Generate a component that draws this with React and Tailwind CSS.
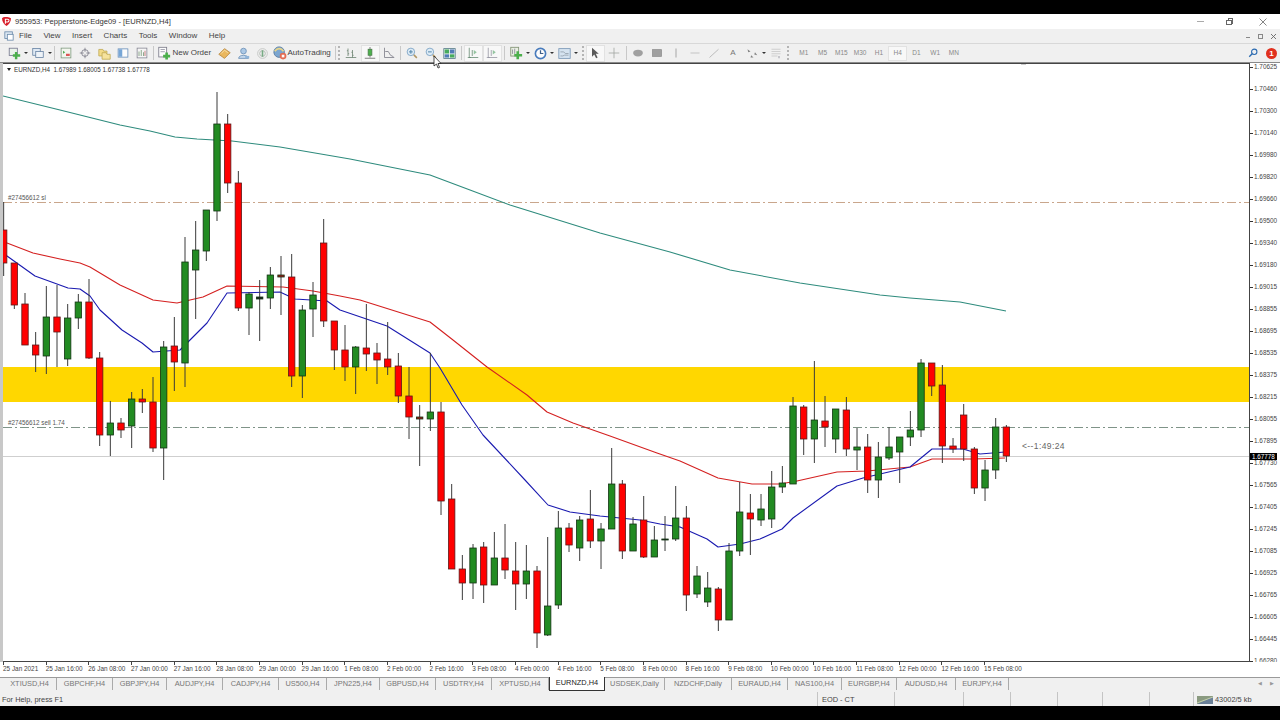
import React from "react";

const C = [
[230,263,202,276,'r'],[263,305,263,309,'r'],[304,345,293,345,'r'],[345,355,332,372,'r'],[317,356,286,374,'g'],[317,332,285,367,'r'],[318,359,304,366,'g'],[302,318,294,329,'g'],[302,358,279,359,'r'],[358,435,352,446,'r'],
[423,435,401,456,'g'],[423,430,418,438,'r'],[399,426,392,448,'g'],[399,402,389,413,'r'],[402,448,377,452,'r'],[347,448,341,480,'g'],[346,362,317,391,'r'],[262,363,237,387,'g'],[250,270,221,319,'g'],[210,251,210,261,'g'],
[124,211,92,221,'g'],[124,183,114,193,'r'],[183,308,171,311,'r'],[294,308,292,335,'g'],[297,299,280,341,'k'],[275,298,267,309,'g'],[275,277,256,315,'d'],[277,376,254,387,'r'],[310,376,305,398,'g'],[295,309,282,337,'g'],
[243,321,219,327,'r'],[321,350,321,370,'r'],[350,367,325,381,'r'],[347,367,346,394,'g'],[348,354,304,371,'r'],[353,360,343,384,'r'],[359,367,322,375,'r'],[366,396,353,403,'r'],[396,417,367,439,'r'],[417,419,405,466,'d'],
[412,419,353,431,'g'],[412,501,402,515,'r'],[499,569,484,569,'r'],[569,583,555,600,'r'],[548,583,544,599,'g'],[547,585,542,603,'r'],[558,585,532,585,'g'],[558,570,524,579,'r'],[571,584,542,610,'r'],[571,584,545,599,'g'],
[571,633,566,648,'r'],[606,635,537,636,'g'],[528,605,511,609,'g'],[528,545,523,552,'r'],[520,548,516,561,'g'],[519,541,490,548,'r'],[529,541,523,569,'g'],[484,529,448,529,'g'],[484,551,480,559,'r'],[524,551,517,551,'g'],
[520,557,496,558,'r'],[540,557,526,557,'g'],[539,540,516,551,'k'],[518,539,486,541,'g'],[518,595,506,611,'r'],[576,594,566,598,'g'],[588,602,572,607,'g'],[589,620,587,631,'r'],[551,620,543,620,'g'],[512,551,482,556,'g'],
[513,519,494,555,'r'],[509,520,494,526,'g'],[487,519,471,528,'g'],[483,487,466,493,'g'],[406,484,397,484,'g'],[407,439,405,455,'r'],[420,439,361,463,'g'],[421,427,396,447,'r'],[409,439,409,453,'g'],[410,449,397,456,'r'],
[447,450,428,470,'g'],[447,480,434,493,'r'],[457,480,442,498,'g'],[447,458,427,460,'g'],[437,452,437,483,'g'],[430,437,411,446,'g'],[363,430,359,437,'g'],[363,386,363,396,'r'],[385,446,365,463,'r'],[446,449,438,453,'r'],
[415,449,404,461,'r'],[449,488,447,494,'r'],[470,488,460,501,'g'],[427,470,418,479,'g'],[427,456,425,462,'r'],
];

const teal = "3,96 60,110 120,125 150,131 175,137 197,139 232,141 280,147 350,159 430,175 470,190 510,205 600,233 670,252 730,270 800,283 880,295 910,298 960,302 1006,311";
const red = "3,240 7,243 33,253 60,259 80,263 90,267 120,285 153,300 177,303 203,297 227,286 283,287 313,291 340,296 360,300 430,322 453,340 487,367 527,395 547,412 573,423 610,436 657,453 680,461 718,478 752,484 780,484 797,481 837,472 867,471 910,467 932,459 973,459 1005,458";
const blue = "3,252 7,256 35,276 68,288 80,289 90,296 100,310 122,330 142,343 153,352 180,350 207,323 227,293 280,292 295,299 327,301 340,310 387,326 430,353 440,368 462,405 483,435 525,480 548,505 570,512 600,516 640,520 660,524 680,527 707,539 718,547 740,544 760,539 782,529 793,518 837,486 863,478 910,467 932,449 963,449 980,454 1005,452";

const prices = ["1.70625","1.70460","1.70300","1.70140","1.69980","1.69820","1.69660","1.69500","1.69340","1.69180","1.69015","1.68855","1.68695","1.68535","1.68375","1.68215","1.68055","1.67895","1.67730","1.67565","1.67405","1.67245","1.67085","1.66925","1.66765","1.66605","1.66445","1.66280"];
const times = ["25 Jan 2021","25 Jan 16:00","26 Jan 08:00","27 Jan 00:00","27 Jan 16:00","28 Jan 08:00","29 Jan 00:00","29 Jan 16:00","1 Feb 08:00","2 Feb 00:00","2 Feb 16:00","3 Feb 08:00","4 Feb 00:00","4 Feb 16:00","5 Feb 08:00","8 Feb 00:00","8 Feb 16:00","9 Feb 08:00","10 Feb 00:00","10 Feb 16:00","11 Feb 08:00","12 Feb 00:00","12 Feb 16:00","15 Feb 08:00"];
const tabs = [
["XTIUSD,H4","w-[54px]"],["GBPCHF,H4","w-[56px]"],["GBPJPY,H4","w-[54px]"],["AUDJPY,H4","w-[56px]"],["CADJPY,H4","w-[56px]"],["US500,H4","w-[48px]"],["JPN225,H4","w-[53px]"],["GBPUSD,H4","w-[56px]"],["USDTRY,H4","w-[56px]"],["XPTUSD,H4","w-[57px]"],["EURNZD,H4","w-[56px]",true],["USDSEK,Daily","w-[60px]"],["NZDCHF,Daily","w-[67px]"],["EURAUD,H4","w-[56px]"],["NAS100,H4","w-[54px]"],["EURGBP,H4","w-[55px]"],["AUDUSD,H4","w-[59px]"],["EURJPY,H4","w-[53px]"],
];

const Ic = ({ children, s = 12 }) => <svg className="opacity-80" width={s} height={s} viewBox="0 0 16 16" fill="none">{children}</svg>;
const Btn = ({ children, active, w = "w-[19px]" }) => (
  <div className={`${w} h-[17px] shrink-0 flex items-center justify-center ${active ? "bg-[#f8f8f8] border border-[#e2e2e2]" : ""}`}>{children}</div>
);
const Caret = () => <div className="w-[5px] shrink-0 flex items-center justify-center"><div className="w-0 h-0 border-l-[2px] border-r-[2px] border-t-[2px] border-l-transparent border-r-transparent border-t-[#333]" /></div>;
const Sep = ({ className }) => <div className={`shrink-0 flex justify-center ${className}`}><div className="w-px h-[14px] bg-[#c8c8c8]" /></div>;
const Grip = ({ className }) => <div className={`shrink-0 h-[14px] border-l-2 border-dotted border-[#b4b4b4] ${className}`} />;

const PlusDoc = () => <Ic s={13}><rect x="1.5" y="1.5" width="10" height="9" fill="#e8f4e8" stroke="#557"/><path d="M10 6v9M6 10.5h9" stroke="#22a022" strokeWidth="3"/></Ic>;
const Windows = () => <Ic><rect x="1" y="2" width="10" height="9" fill="#dbe8f5" stroke="#3a5f8a"/><rect x="5" y="6" width="10" height="8" fill="#eef4fa" stroke="#3a5f8a"/></Ic>;
const Market = () => <Ic><rect x="1.5" y="1.5" width="13" height="13" fill="#f4f8ee" stroke="#5a7f5a"/><path d="M4 5l3 2-3 2z" fill="#2a9a2a"/><path d="M8 9h5v3H8z" fill="#d83030"/></Ic>;
const Cross = () => <Ic><circle cx="8" cy="8" r="4.5" stroke="#556" /><path d="M8 1v14M1 8h14" stroke="#556"/><circle cx="8" cy="8" r="2" fill="#eee"/></Ic>;
const Folders = () => <Ic s={13}><path d="M1 3h5l1 2h4v6H1z" fill="#f5d870" stroke="#b59a30"/><path d="M5 7h5l1 2h4v6H5z" fill="#f8e08a" stroke="#b59a30"/></Ic>;
const BlueWin = () => <Ic><rect x="1.5" y="2.5" width="13" height="11" fill="#fff" stroke="#3a6ea8"/><rect x="2" y="3" width="5" height="10" fill="#5a94d0"/></Ic>;
const ChartWin = () => <Ic><rect x="1.5" y="1.5" width="13" height="13" fill="#f8f8f8" stroke="#667"/><path d="M4 12V6M7 12V4M10 12V7" stroke="#4a7a4a"/><path d="M12 12V5" stroke="#a33"/></Ic>;
const Order = () => <Ic s={14}><rect x="2" y="1.5" width="9" height="11" fill="#fff" stroke="#667"/><path d="M4 4h5M4 6.5h5" stroke="#889"/><path d="M11 7.5v8M7 11.5h8" stroke="#22a022" strokeWidth="3"/></Ic>;
const Diamond = () => <Ic s={13}><path d="M1 9l7-7 7 5-7 7z" fill="#e9a93a" stroke="#a8701a"/><path d="M4 8l4-4 4 3" stroke="#fae5a8"/></Ic>;
const People = () => <Ic s={13}><circle cx="8" cy="5" r="3.5" fill="#9cc0e4" stroke="#4a78a8"/><path d="M2 14c0-5 12-5 12 0z" fill="#b9d2ec" stroke="#4a78a8"/><path d="M10 11h5v3h-5z" fill="#7aa7d4"/></Ic>;
const Signal = () => <Ic s={13}><circle cx="8" cy="8" r="6" stroke="#b4b8b4"/><circle cx="8" cy="8" r="3.5" stroke="#9aa49a"/><path d="M8 4v8" stroke="#5a9a6a" strokeWidth="2"/></Ic>;
const Auto = () => <Ic s={14}><circle cx="7" cy="7" r="6" fill="#5e93c7" stroke="#34608e"/><path d="M2 6c3-4 7-4 10 0" stroke="#e8d070" strokeWidth="2"/><circle cx="11.5" cy="11.5" r="3.8" fill="#e24a2a"/><rect x="10" y="10" width="3" height="3" fill="#fff"/></Ic>;
const Bars = () => <Ic><path d="M1 14h14M4 2v10M2.5 5H4M4 9h1.5M10 4v10M8.5 7H10M10 11h1.5" stroke="#43604a"/></Ic>;
const Candle = () => <Ic><path d="M1 15h14M8 0v14" stroke="#333"/><rect x="5.5" y="3" width="5" height="8" fill="#22a022" stroke="#1a5a1a"/></Ic>;
const LineI = () => <Ic><path d="M2 1v13h13M3 6l4 0 3 5 4 2" stroke="#556"/></Ic>;
const ZoomI = ({ plus }) => <Ic><circle cx="6.5" cy="6.5" r="5" fill="#d9ebf8" stroke="#4a80b0"/><path d="M10.5 10.5l4 4" stroke="#a08040" strokeWidth="2"/><path d={plus ? "M4 6.5h5M6.5 4v5" : "M4 6.5h5"} stroke="#2a6a9a" strokeWidth="1.3"/></Ic>;
const Tile = () => <Ic s={13}><rect x="1" y="2" width="14" height="12" fill="#fff" stroke="#2a5a6a"/><rect x="2" y="3" width="5.5" height="5" fill="#1e9a3a"/><rect x="8.5" y="3" width="5.5" height="5" fill="#2a60a8"/><rect x="2" y="9" width="5.5" height="4" fill="#2a60a8"/><rect x="8.5" y="9" width="5.5" height="4" fill="#1e9a3a"/></Ic>;
const Shift = ({ c }) => <Ic><path d="M3 1v13h12M1 14h4M7 12V4" stroke={c}/><path d="M9 4l4 3-4 3z" fill="#7ab88a"/></Ic>;
const Indic = () => <Ic s={14}><rect x="2" y="1.5" width="9" height="10" fill="#e8efe0" stroke="#6a7f5a"/><path d="M4 4v5M6.5 3v6" stroke="#778"/><path d="M10 6v9M6 10.5h9" stroke="#22a022" strokeWidth="3"/></Ic>;
const Clock = () => <Ic s={13}><circle cx="8" cy="8" r="6.3" fill="#fff" stroke="#1f5fb0" strokeWidth="2"/><path d="M8 4v4h3.5" stroke="#123a70" strokeWidth="1.5"/></Ic>;
const Templ = () => <Ic s={13}><rect x="1" y="2" width="14" height="12" fill="#cfe0f0" stroke="#5a80a8"/><path d="M3 6h4l2 2h4M3 11h3l2-1h5" stroke="#7a8a9a"/></Ic>;
const Arrow = () => <Ic><path d="M4 1v12l3-3 2.5 5 2-1L9 9h4z" fill="#333"/></Ic>;
const Plus = () => <Ic><path d="M8 1v14M1 8h14" stroke="#8a8f8a"/></Ic>;
const Ell = () => <Ic><ellipse cx="8" cy="8" rx="6.5" ry="4.5" fill="#8d8d8d"/></Ic>;
const RectI = () => <Ic><rect x="2" y="3.5" width="12" height="9" fill="#8d8d8d" stroke="#777"/></Ic>;
const VL = () => <Ic><path d="M8 2v12" stroke="#777"/></Ic>;
const HL = () => <Ic><path d="M2 8h12" stroke="#aaa"/></Ic>;
const TL = () => <Ic><path d="M2 14L14 3" stroke="#999"/></Ic>;
const Arrows = () => <Ic><path d="M2 3l4 3-3 1zM12 7l3 4-4-1zM7 11l3 3-4 0z" fill="#666"/></Ic>;
const Fibo = () => <Ic><path d="M2 3h12M2 6h12M2 9h12M2 12h8" stroke="#bbb"/><path d="M12 12v3" stroke="#667"/></Ic>;

const Logo = () => <svg width="9" height="9" viewBox="0 0 12 12"><path d="M0 1.5C3-1 9-.2 12 1.5 12 6 9 10 6 12 3 10 0 6 0 1.5z" fill="#d81e2a"/><path d="M4.5 9V3h3a1.6 1.6 0 010 3.6h-3" stroke="#fff" strokeWidth="1.4" fill="none"/></svg>;

function Chart() {
  return (
    <svg className="block w-full h-full" viewBox="3 64 1246 597" preserveAspectRatio="none">
      <rect x="3" y="367" width="1246" height="35" fill="#ffd700" />
      <path d="M3 202.5H1249" stroke="#c9a68c" strokeWidth="1" strokeDasharray="9 3 2 3" />
      <path d="M3 427.5H1249" stroke="#7f9488" strokeWidth="1" strokeDasharray="9 3 2 3" />
      <path d="M3 456.5H1249" stroke="#cfcfcf" strokeWidth="1" />
      <path d="M1021 64.5H1026" stroke="#cccccc" strokeWidth="1" />
      <polyline points={teal} fill="none" stroke="#2e8b7d" strokeWidth="1.1" strokeLinejoin="round" />
      <polyline points={red} fill="none" stroke="#d42020" strokeWidth="1.1" strokeLinejoin="round" />
      <polyline points={blue} fill="none" stroke="#1a1ab0" strokeWidth="1.1" strokeLinejoin="round" />
      {C.map((c, i) => {
        const x = 3.67 + 10.667 * i;
        const fill = c[4] === "r" ? "#ff0000" : c[4] === "g" ? "#228b22" : c[4] === "d" ? "#a01a1a" : "#222222";
        return (
          <g key={i}>
            <path d={`M${x} ${c[2]}V${c[3]}`} stroke="#3a3a3a" strokeWidth="1" />
            <rect x={x - 3.2} y={c[0]} width="6.4" height={c[1] - c[0]} fill={fill} stroke={c[4] === "r" ? "#5a1a1a" : "#123312"} strokeWidth="0.8" />
          </g>
        );
      })}
    </svg>
  );
}

export default function App() {
  return (
    <div className="relative w-[1280px] h-[720px] overflow-hidden bg-white flex flex-col font-['Liberation_Sans',sans-serif] text-[#333]">
      <div className="h-[14px] shrink-0 bg-black" />
      {/* title */}
      <div className="h-[15px] shrink-0 bg-white flex items-center pl-[2px]">
        <Logo />
        <span className="ml-[4px] text-[7.6px] text-[#333]">955953: Pepperstone-Edge09 - [EURNZD,H4]</span>
        <div className="ml-auto flex items-center">
          <div className="w-[7px] h-px bg-[#aaa] mr-[22px]" />
          <div className="relative w-[7px] h-[7px] mr-[26px]">
            <div className="absolute left-[1.5px] top-0 w-[5.5px] h-[5.5px] border border-[#666]" />
            <div className="absolute left-0 top-[1.5px] w-[5.5px] h-[5.5px] border border-[#666] bg-white" />
          </div>
          <svg className="mr-[13px]" width="8" height="8" viewBox="0 0 8 8"><path d="M.5.5l7 7M7.5.5l-7 7" stroke="#666" strokeWidth="0.8"/></svg>
        </div>
      </div>
      {/* menu */}
      <div className="h-[14px] shrink-0 bg-[#f0f0f0] flex items-center text-[8px] text-[#444]">
        <div className="w-[19px] flex justify-center pr-[2px]">
          <svg width="10" height="10" viewBox="0 0 12 12" fill="none"><rect x="1" y="1" width="9" height="8" fill="#dfe9f3" stroke="#6a8aaa"/><rect x="4" y="4" width="7" height="7" fill="#fff" stroke="#6a8aaa"/></svg>
        </div>
        <div className="flex gap-[11.5px]">
          {["File", "View", "Insert", "Charts", "Tools", "Window", "Help"].map(m => <span key={m}>{m}</span>)}
        </div>
        <div className="ml-auto flex items-center gap-[8px] pr-[4px] text-[#888]">
          <div className="w-[4px] h-px bg-[#888] mt-[3px]" />
          <div className="w-[5px] h-[5px] border border-[#888]" />
          <svg width="5" height="5" viewBox="0 0 5 5"><path d="M0 0l5 5M5 0L0 5" stroke="#666" strokeWidth="0.9"/></svg>
        </div>
      </div>
      {/* toolbar */}
      <div className="h-[20px] shrink-0 bg-[#f0f0f0] border-t border-[#d8d8d8] border-b border-b-[#8a8a8a] flex items-center pl-[4.5px] text-[8px] text-[#444]">
        <Btn><PlusDoc /></Btn><Caret />
        <Btn><Windows /></Btn><Caret />
        <Sep className="w-[4px]" />
        <Btn><Market /></Btn><Btn><Cross /></Btn><Btn><Folders /></Btn><Btn><BlueWin /></Btn><Btn><ChartWin /></Btn>
        <Sep className="w-[4px]" />
        <div className="w-[59px] shrink-0 flex items-center"><div className="w-[16px] flex justify-center"><Order /></div><span className="ml-[1px]">New Order</span></div>
        <Btn><Diamond /></Btn><Btn><People /></Btn><Btn><Signal /></Btn>
        <div className="w-[62px] shrink-0 flex items-center"><div className="w-[16px] flex justify-center"><Auto /></div><span>AutoTrading</span></div>
        <Sep className="w-[4px]" />
        <Grip className="w-[4px]" />
        <Btn><Bars /></Btn><Btn active><Candle /></Btn><Btn><LineI /></Btn>
        <Sep className="w-[4px]" />
        <Btn><ZoomI plus /></Btn><Btn><ZoomI /></Btn>
        <Btn w="w-[18px]"><Tile /></Btn>
        <Sep className="w-[5px]" />
        <Btn active><Shift c="#3a6a4a" /></Btn><Btn active><Shift c="#778" /></Btn>
        <Sep className="w-[5px]" />
        <Btn><Indic /></Btn><Caret />
        <Btn><Clock /></Btn><Caret />
        <Btn><Templ /></Btn><Caret />
        <Grip className="w-[4px] ml-[3px]" />
        <Btn active><Arrow /></Btn><Btn><Plus /></Btn>
        <Sep className="w-[5px]" />
        <Btn><Ell /></Btn><Btn><RectI /></Btn><Btn><VL /></Btn><Btn><HL /></Btn><Btn><TL /></Btn>
        <Btn><span className="text-[8px] text-[#777]">A</span></Btn>
        <Btn><Arrows /></Btn><Caret />
        <Btn><Fibo /></Btn>
        <Grip className="w-[4px] ml-[1px]" />
        <div className="flex items-center text-[6.5px] text-[#888] ml-[4px]">
          {["M1", "M5", "M15", "M30", "H1", "H4", "D1", "W1", "MN"].map(t => (
            <div key={t} className={`w-[18.75px] h-[15px] flex items-center justify-center ${t === "H4" ? "bg-[#f8f8f8] border border-[#e2e2e2]" : ""}`}>{t}</div>
          ))}
        </div>
        <div className="ml-auto flex items-center gap-[8px] pr-[3px]">
          <svg width="10" height="10" viewBox="0 0 12 12" fill="none"><circle cx="7.5" cy="4.5" r="3.2" stroke="#2a6ab0" strokeWidth="1.3"/><path d="M5 7L1.5 10.5" stroke="#2a6ab0" strokeWidth="1.6"/></svg>
          <div className="w-[11px] h-[11px] rounded-full bg-[#e0301e] text-white text-[8px] leading-[11px] text-center font-bold">1</div>
        </div>
      </div>
      {/* chart row */}
      <div className="h-[599px] shrink-0 flex">
        <div className="w-[3px] shrink-0 bg-[#c8c8c8]" />
        <div className="relative w-[1247px] shrink-0 border-t border-r border-b border-[#444]">
          <Chart />
          <div className="absolute left-[4px] top-px flex items-center text-[6.3px] whitespace-pre text-[#333]">
            <div className="w-0 h-0 mr-[3px] border-l-[2.5px] border-r-[2.5px] border-t-[3px] border-l-transparent border-r-transparent border-t-[#222]" />
            <span>EURNZD,H4  1.67989 1.68005 1.67738 1.67778</span>
          </div>
          <span className="absolute left-[5px] top-[129px] text-[6.3px] text-[#555]">#27456612 sl</span>
          <span className="absolute left-[5px] top-[354px] text-[6.3px] text-[#555]">#27456612 sell 1.74</span>
          <span className="absolute left-[1019px] top-[376px] text-[8.5px] tracking-[0.4px] text-[#666]">{"<--1:49:24"}</span>
        </div>
        <div className="w-[30px] shrink-0 flex flex-col -mt-[7px]">
          {prices.map(p => (
            <div key={p} className="h-[22px] shrink-0 flex items-center">
              <div className="w-[3px] h-px bg-[#333]" />
              <span className="ml-[1px] text-[6.4px] text-[#444]">{p}</span>
            </div>
          ))}
        </div>
      </div>
      <div className="absolute left-[1250px] top-[453px] w-[27px] h-[7px] bg-black text-white text-[6.3px] leading-[7px] text-center">1.67778</div>
      {/* x axis */}
      <div className="h-[15px] shrink-0 flex pl-[3px] bg-white">
        {times.map(t => (
          <div key={t} className="w-[42.67px] shrink-0 flex flex-col">
            <div className="w-px h-[3px] bg-[#444]" />
            <span className="text-[6.4px] leading-[8px] whitespace-nowrap text-[#444]">{t}</span>
          </div>
        ))}
      </div>
      {/* tabs */}
      <div className="h-[15px] shrink-0 bg-[#f0f0f0] border-t border-[#9a9a9a] flex items-start pl-[3px] text-[7.4px] text-[#777]">
        {tabs.map(([t, w, a]) => (
          <div key={t} className={`${w} shrink-0 flex items-center justify-center ${a ? "h-[14px] -mt-px pb-px bg-white text-[#222] border-l border-r border-b border-[#333]" : "h-[12px] border-r border-[#aaa]"}`}>{t}</div>
        ))}
        <div className="ml-auto flex gap-[8px] pr-[6px] pt-[2px] text-[5px] text-[#999]"><span>◀</span><span>▶</span></div>
      </div>
      {/* status */}
      <div className="h-[14px] shrink-0 bg-[#f0f0f0] flex items-center text-[7.4px] text-[#444]">
        <span className="pl-[2px] pt-[2px] w-[817px] shrink-0">For Help, press F1</span>
        <div className="w-[77px] shrink-0 h-full border-l border-[#c4c4c4] pl-[4px] pt-[2px] flex items-center">EOD - CT</div>
        <div className="w-[69px] shrink-0 h-full border-l border-[#c4c4c4]" />
        <div className="w-[47px] shrink-0 h-full border-l border-[#c4c4c4]" />
        <div className="w-[47px] shrink-0 h-full border-l border-[#c4c4c4]" />
        <div className="w-[45px] shrink-0 h-full border-l border-[#c4c4c4]" />
        <div className="w-[47px] shrink-0 h-full border-l border-[#c4c4c4]" />
        <div className="w-[44px] shrink-0 h-full border-l border-[#c4c4c4]" />
        <div className="flex-1 h-full border-l border-[#c4c4c4] pl-[3px] pt-[2px] flex items-center gap-[2px]">
          <svg width="16" height="8" viewBox="0 0 16 8"><rect width="16" height="8" fill="#8a9a80"/><path d="M0 8L16 1V8z" fill="#6a8098"/><path d="M0 7L16 1" stroke="#e0e8c0" strokeWidth="0.7"/></svg>
          <span>43002/5 kb</span>
        </div>
      </div>
      <div className="h-[14px] shrink-0 bg-black" />
      {/* mouse pointer */}
      <svg className="absolute left-[433px] top-[55px]" width="9" height="14" viewBox="0 0 9 14"><path d="M1 1v10l2.5-2 1.5 4 1.5-.6L5 8.5h3z" fill="#fff" stroke="#222" strokeWidth="0.8"/></svg>
    </div>
  );
}
